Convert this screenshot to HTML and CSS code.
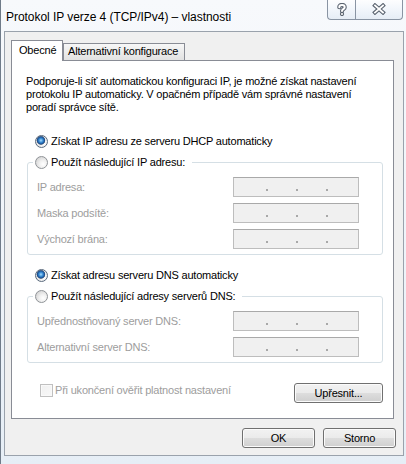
FILE: index.html
```html
<!DOCTYPE html>
<html lang="cs">
<head>
<meta charset="utf-8">
<title>Protokol IP verze 4 (TCP/IPv4) – vlastnosti</title>
<link rel="stylesheet" href="styles.css">
</head>
<body>
<div class="window">
  <div class="titlebar">
    <div class="title">Protokol IP verze 4 (TCP/IPv4) – vlastnosti</div>
    <div class="caption">
      <div class="cbtn help">
        <svg width="12" height="13" viewBox="0 0 12 13">
          <g fill="none" stroke-linecap="round" stroke-linejoin="round">
            <path d="M3.3 4.2 C3.3 1.2 8.7 1.2 8.7 4.2 C8.7 6 6 6.2 6 8" stroke="#5b6470" stroke-width="4.2"/>
            <path d="M6 10.9 L6 11" stroke="#5b6470" stroke-width="4.2"/>
            <path d="M3.3 4.2 C3.3 1.2 8.7 1.2 8.7 4.2 C8.7 6 6 6.2 6 8" stroke="#fff" stroke-width="2"/>
            <path d="M6 10.9 L6 11" stroke="#fff" stroke-width="2"/>
          </g>
        </svg>
      </div>
      <div class="cbtn close">
        <svg width="14" height="12" viewBox="0 0 14 12">
          <g fill="none" stroke-linecap="square">
            <path d="M3 2.5 L11 9.5 M11 2.5 L3 9.5" stroke="#5b6470" stroke-width="4"/>
            <path d="M3 2.5 L11 9.5 M11 2.5 L3 9.5" stroke="#fff" stroke-width="1.8"/>
          </g>
        </svg>
      </div>
    </div>
  </div>

  <div class="client">
    <div class="tabs">
      <div class="tab active">Obecné</div>
      <div class="tab alt">Alternativní konfigurace</div>
    </div>

    <div class="panel">
      <p class="intro">Podporuje-li síť automatickou konfiguraci IP, je možné získat nastavení<br>protokolu IP automaticky. V opačném případě vám správné nastavení<br>poradí správce sítě.</p>

      <div class="opt first-opt"><span class="radio checked"></span><span>Získat IP adresu ze serveru DHCP automaticky</span></div>
      <fieldset class="group">
        <legend class="opt"><span class="radio"></span><span>Použít následující IP adresu:</span></legend>
        <div class="fields">
          <div class="field"><span class="label">IP adresa:</span><span class="ipbox"><i></i><i></i><i></i></span></div>
          <div class="field"><span class="label">Maska podsítě:</span><span class="ipbox"><i></i><i></i><i></i></span></div>
          <div class="field"><span class="label">Výchozí brána:</span><span class="ipbox"><i></i><i></i><i></i></span></div>
        </div>
      </fieldset>

      <div class="opt second-opt"><span class="radio checked"></span><span>Získat adresu serveru DNS automaticky</span></div>
      <fieldset class="group">
        <legend class="opt"><span class="radio"></span><span>Použít následující adresy serverů DNS:</span></legend>
        <div class="fields">
          <div class="field"><span class="label">Upřednostňovaný server DNS:</span><span class="ipbox"><i></i><i></i><i></i></span></div>
          <div class="field"><span class="label">Alternativní server DNS:</span><span class="ipbox"><i></i><i></i><i></i></span></div>
        </div>
      </fieldset>

      <div class="bottom-row">
        <div class="check"><span class="checkbox"></span><span>Při ukončení ověřit platnost nastavení</span></div>
        <button class="btn advanced">Upřesnit...</button>
      </div>
    </div>

    <div class="actions">
      <button class="btn dlg">OK</button>
      <button class="btn dlg">Storno</button>
    </div>
  </div>
</div>
</body>
</html>
```

FILE: styles.css
```css
* { box-sizing: border-box; }

html, body {
  margin: 0;
  padding: 0;
}

body {
  width: 406px;
  height: 464px;
  overflow: hidden;
  font-family: "Liberation Sans", Arial, sans-serif;
  font-size: 11px;
  letter-spacing: -0.2px;
  color: #000;
  background: #e9f0f7;
}

.window {
  width: 406px;
  height: 464px;
  background: linear-gradient(180deg, #f7f9fc 0%, #eef3f9 60%, #e6eef6 100%);
  border-left: 1px solid #6f7b89;
  display: flex;
  flex-direction: column;
}

/* title bar */
.titlebar {
  height: 31px;
  display: flex;
  align-items: flex-start;
  padding-left: 5px;
}

.title {
  flex: 1;
  margin-top: 10px;
  font-size: 12px;
  line-height: 15px;
  letter-spacing: -0.05px;
  color: #000;
  text-shadow: 0 0 5px #fff, 0 0 3px #fff;
  white-space: nowrap;
}

.caption {
  display: flex;
  margin-right: 3px;
}

.cbtn {
  height: 20px;
  border: 1px solid #8994a3;
  border-top: none;
  display: flex;
  align-items: center;
  justify-content: center;
  background: linear-gradient(180deg, rgba(255,255,255,0.75) 0%, rgba(240,245,251,0.8) 50%, rgba(226,234,244,0.8) 100%);
}

.cbtn.help {
  width: 28px;
  border-right: none;
  border-radius: 0 0 0 4px;
  padding-bottom: 1px;
}

.cbtn.close {
  width: 48px;
  border-radius: 0 0 4px 0;
  padding-bottom: 1px;
}

/* client area */
.client {
  margin-left: 3px;
  width: 400px;
  height: 425px;
  background: #f0f0f0;
  border: 1px solid #9aa2ac;
  padding: 8px 0 0 6px;
}

.tabs {
  display: flex;
  align-items: flex-end;
  height: 20px;
}

.tab {
  height: 17px;
  border: 1px solid #898c95;
  border-bottom: none;
  padding: 0 4px;
  line-height: 15px;
  background: linear-gradient(180deg, #f7f7f7 0%, #ececec 50%, #e2e2e2 100%);
  white-space: nowrap;
}

.tab.alt {
  width: 122px;
}

.tab.active {
  position: relative;
  z-index: 1;
  width: 52px;
  height: 21px;
  margin-bottom: -1px;
  padding: 1px 0 0 7px;
  line-height: 17px;
  background: #fff;
}

.panel {
  width: 383px;
  height: 359px;
  border: 1px solid #898c95;
  background: #fff;
  padding: 14px 10px 0 14px;
}

.intro {
  margin: 0;
  line-height: 13px;
  white-space: nowrap;
}

.opt {
  display: flex;
  align-items: center;
  gap: 3px;
  height: 16px;
  line-height: 16px;
  white-space: nowrap;
}

.first-opt {
  margin: 19px 0 0 9px;
}

.second-opt {
  margin: 12px 0 0 9px;
}

.radio {
  flex: none;
  width: 13px;
  height: 13px;
  border-radius: 50%;
  border: 1px solid #8f9397;
  background: radial-gradient(circle at 65% 65%, #ffffff 0%, #f1f1f1 35%, #d8d8d8 75%, #c8c8c8 100%);
}

.radio.checked {
  border-color: #5a6a7d;
  background:
    radial-gradient(circle at 45% 40%, #a9dcfb 0px, #3b8ed6 2px, #1a4f91 3.6px, rgba(20,50,90,0.6) 4.2px, rgba(0,0,0,0) 4.6px),
    radial-gradient(circle at 65% 65%, #ffffff 0%, #eeeeee 40%, #d0d0d0 100%);
}

.group {
  margin: 5px 0 0 1px;
  width: 356px;
  border: 1px solid #d5dfe5;
  border-radius: 3px;
  padding: 0 0 5px 0;
  min-width: 0;
}

.group legend {
  margin-left: 5px;
  padding: 0 7px 0 2px;
}

.fields {
  display: flex;
  flex-direction: column;
  gap: 6px;
  padding: 7px 23px 0 9px;
}

.field {
  display: flex;
  justify-content: space-between;
  align-items: center;
  height: 20px;
}

.label {
  color: #9d9d9d;
  white-space: nowrap;
}

.ipbox {
  width: 126px;
  height: 20px;
  border: 1px solid #bdbdbd;
  border-top-color: #a9a9a9;
  background: #f0f0f0;
  display: flex;
  align-items: flex-start;
  gap: 28px;
  padding: 11px 0 0 32px;
}

.ipbox i {
  display: block;
  width: 2px;
  height: 2px;
  background: #a8a8a8;
}

.bottom-row {
  margin-top: 20px;
  display: flex;
  justify-content: space-between;
  align-items: flex-start;
  padding-left: 14px;
}

.check {
  display: flex;
  align-items: center;
  gap: 2px;
  margin-top: 1px;
  height: 13px;
  line-height: 13px;
  color: #9d9d9d;
  white-space: nowrap;
}

.checkbox {
  flex: none;
  width: 13px;
  height: 13px;
  border: 1px solid #c0c0c0;
  background: linear-gradient(135deg, #f0f0f0 0%, #f8f8f8 100%);
  box-shadow: inset 0 0 0 1px #f9f9f9;
}

.btn {
  height: 20px;
  margin: 0;
  padding: 0;
  font-family: "Liberation Sans", Arial, sans-serif;
  font-size: 11px;
  letter-spacing: -0.2px;
  line-height: 18px;
  color: #000;
  border: 1px solid #707070;
  border-radius: 3px;
  background: linear-gradient(180deg, #f2f2f2 0%, #ebebeb 48%, #dddddd 52%, #cfcfcf 100%);
  box-shadow: inset 0 0 0 1px #fbfbfb;
  text-align: center;
}

.btn.advanced {
  width: 89px;
}

.actions {
  display: flex;
  justify-content: flex-end;
  gap: 8px;
  margin-top: 9px;
  padding-right: 7px;
}

.btn.dlg {
  width: 73px;
}
```
